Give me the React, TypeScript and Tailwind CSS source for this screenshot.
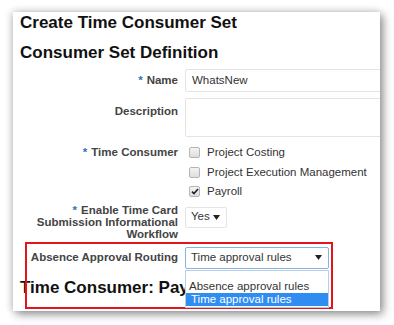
import React from "react";

const Arrow = () => (
  <svg width="7" height="5" viewBox="0 0 7 5" className="shrink-0">
    <path d="M0 0 L7 0 L3.5 5 Z" fill="#222" />
  </svg>
);

const Check = ({ checked }: { checked?: boolean }) => (
  <div className="w-[19px] h-[19px] flex items-center justify-center shrink-0">
    <div className="w-[11px] h-[11px] rounded-[2px] border border-[#b5b5b5] bg-gradient-to-b from-[#f4f4f4] to-[#dedede] flex items-center justify-center">
      {checked && (
        <svg width="8" height="7" viewBox="0 0 8 7">
          <path d="M1 3.6 L3 5.6 L7 1" stroke="#222" strokeWidth="1.6" fill="none" />
        </svg>
      )}
    </div>
  </div>
);

const Req = () => <span className="text-[#2f6fc4] mr-[4px]">*</span>;

export default function App() {
  return (
    <div
      className="w-[394px] h-[325px] bg-white overflow-hidden pt-[12px] pl-[13px]"
      style={{ fontFamily: '"Liberation Sans", Arial, sans-serif' }}
    >
      <div className="relative w-[367px] h-[299px] bg-white overflow-hidden shadow-[3px_3px_9px_rgba(0,0,0,0.45),-2px_-1px_7px_rgba(0,0,0,0.12)]">
        <div className="pl-[7px] pt-[1px] text-[17px] leading-[20px] font-bold text-[#111] whitespace-nowrap">
          Create Time Consumer Set
        </div>
        <div className="pl-[7px] mt-[10px] text-[17px] leading-[20px] font-bold text-[#111] whitespace-nowrap">
          Consumer Set Definition
        </div>

        <div className="mt-[6px] flex flex-col text-[11.5px] text-[#333]">
          {/* Name */}
          <div className="flex gap-[7px] items-center">
            <div className="w-[165px] shrink-0 text-right font-bold text-[#444]">
              <Req />Name
            </div>
            <div className="w-[220px] shrink-0 h-[23px] border border-[#e4e4e4] rounded-[2px] flex items-center pl-[6px] text-[11.5px] text-[#333]">
              WhatsNew
            </div>
          </div>
          {/* Description */}
          <div className="flex gap-[7px] mt-[6px]">
            <div className="w-[165px] shrink-0 text-right font-bold text-[#444] pt-[5px]">Description</div>
            <div className="w-[220px] shrink-0 h-[39px] border border-[#e4e4e4] rounded-[2px]" />
          </div>
          {/* Time consumer */}
          <div className="flex gap-[7px] mt-[6px]">
            <div className="w-[165px] shrink-0 text-right font-bold text-[#444] pt-[1px]">
              <Req />Time Consumer
            </div>
            <div className="flex flex-col text-[11.5px] text-[#333] whitespace-nowrap">
              <div className="flex items-center h-[19.5px] gap-[3px]">
                <Check />
                <span>Project Costing</span>
              </div>
              <div className="flex items-center h-[19.5px] gap-[3px]">
                <Check />
                <span>Project Execution Management</span>
              </div>
              <div className="flex items-center h-[19.5px] gap-[3px]">
                <Check checked />
                <span>Payroll</span>
              </div>
            </div>
          </div>
          {/* Enable */}
          <div className="flex gap-[7px] mt-[2px]">
            <div className="w-[165px] shrink-0 text-right font-bold text-[#444] leading-[12px]">
              <div>
                <Req />Enable Time Card
              </div>
              <div>Submission Informational</div>
              <div>Workflow</div>
            </div>
            <div className="mt-[3px] w-[42px] shrink-0 h-[21px] border border-[#e4e4e4] rounded-[2px] flex items-center justify-between pl-[5px] pr-[6px] text-[11.5px] text-[#333]">
              <span>Yes</span>
              <Arrow />
            </div>
          </div>
          {/* Absence */}
          <div className="flex gap-[7px] mt-[7px] items-center">
            <div className="w-[165px] shrink-0 text-right font-bold text-[#444] whitespace-nowrap">Absence Approval Routing</div>
            <div className="relative shrink-0">
              <div className="w-[144px] h-[22px] border border-[#86b3e6] rounded-[2px] flex items-center justify-between pl-[5px] pr-[6px] text-[11.5px] text-[#333]">
                <span>Time approval rules</span>
                <Arrow />
              </div>
              <div className="absolute z-10 left-0 top-[23px] w-[144px] h-[38px] bg-white border border-[#b9cde4] pt-[8px] text-[11.5px]">
                <div className="pl-[3px] h-[14px] leading-[14px] text-[#333]">Absence approval rules</div>
                <div className="pl-[5px] h-[13px] leading-[13px] bg-[#2f8df2] text-white">Time approval rules</div>
              </div>
            </div>
          </div>
        </div>

        <div className="w-[172px] overflow-hidden pl-[7px] mt-[8px] text-[17px] leading-[22px] font-bold text-[#111] whitespace-nowrap">
          Time Consumer: Payroll
        </div>

        <div className="absolute left-[12px] top-[230px] w-[308px] h-[67px] border-2 border-[#e5141c] pointer-events-none" />
      </div>
    </div>
  );
}
